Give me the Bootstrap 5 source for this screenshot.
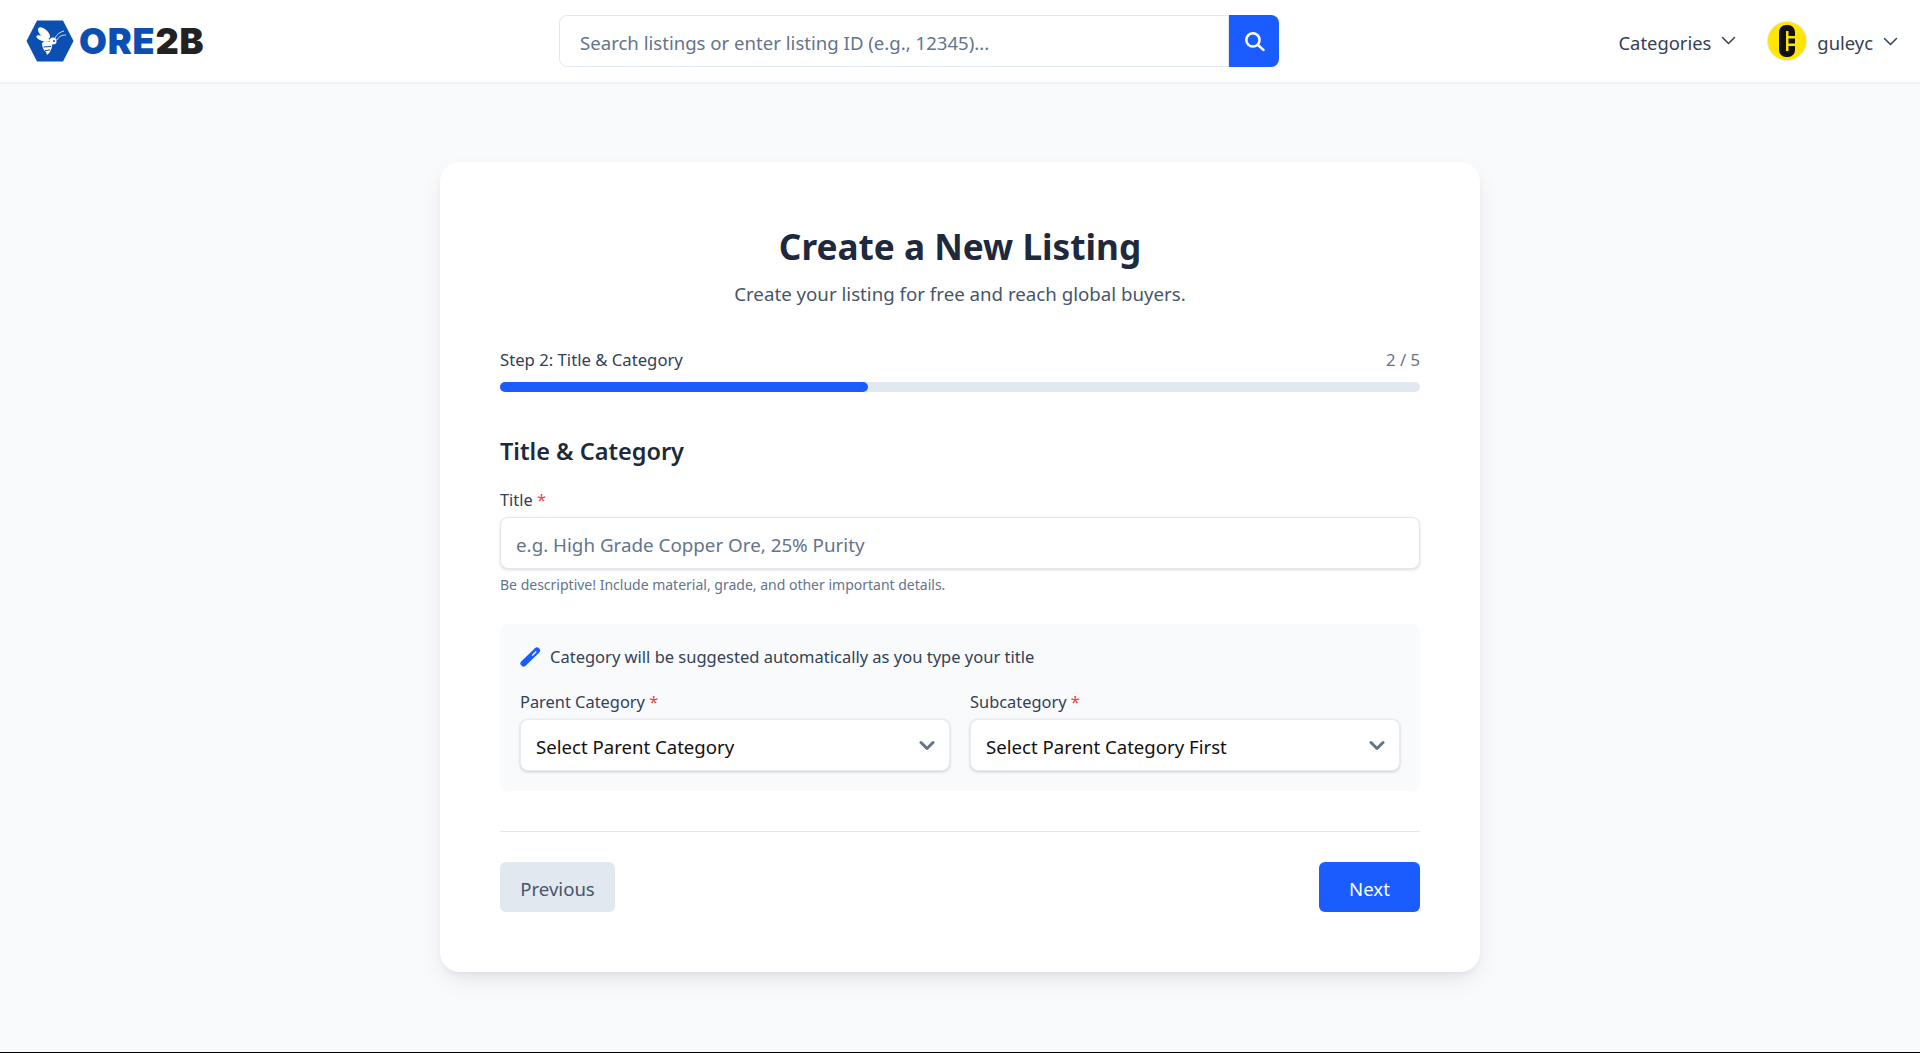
<!DOCTYPE html>
<html lang="en">
<head>
    <meta charset="UTF-8">
    <meta name="viewport" content="width=device-width, initial-scale=1.0">
    <title>Create a New Listing</title>
    <link rel="stylesheet" href="https://cdn.jsdelivr.net/npm/bootstrap@5.3.0/dist/css/bootstrap.min.css">
    <style>
        body { background: #f9fafc; font-family: "Noto Sans", "Open Sans", sans-serif; color: #334155; min-height: 1053px; }
        .top-bar { height: 82px; background: #fff; box-shadow: 0 1px 3px rgba(15,23,42,.07); padding: 0 22px 0 26px; }
        .logo-link { width: 520px; text-decoration: none; }
        .logo-word { font-family: Inter, sans-serif; font-weight: 900; font-size: 36px; letter-spacing: .8px; line-height: 1; color: #0b4fb3; margin-left: 5px; }
        .logo-word span { color: #222; margin: 0; }
        .search-box { width: 720px; height: 52px; margin-left: 13px; }
        .search-box .form-control { height: 52px; font-size: 18.6px; padding: 2px 12px 0 20px; border-color: #e2e8f0; border-radius: 8px 0 0 8px; color: #475569; }
        .search-box .form-control::placeholder { color: #64748b; }
        .search-go { flex: 0 0 50px; background: #1a5cff; border: 0; border-radius: 0 8px 8px 0; }
        .nav-drop { font-size: 18.4px; color: #334155; text-decoration: none; }
        .nav-label { padding-top: 3px; }
        .nav-caret { margin-left: 10px; }
        .user-menu { margin-left: 31px; }
        .avatar-dot { width: 40px; height: 40px; margin-right: 10px; border-radius: 50%; background: #ffe600; border: 1px solid #e2e8f0; }
        .sheet { width: 1040px; height: 810px; margin: 80px auto 0; padding: 60px; background: #fff; border-radius: 20px; box-shadow: 0 10px 25px -5px rgba(15,23,42,.1), 0 4px 10px -4px rgba(15,23,42,.08); }
        .sheet-title { font-size: 35.2px; font-weight: 700; color: #1e293b; line-height: 48px; margin: 0; }
        .sheet-sub { font-size: 18.7px; color: #475569; line-height: 28px; margin: 10px 0 0; }
        .step-row { margin-top: 40px; font-size: 16.7px; line-height: 24px; color: #334155; }
        .step-count { color: #64748b; }
        .step-track { height: 10px; background: #e2e8f0; border-radius: 5px; margin-top: 10px; }
        .step-fill { height: 10px; background: #1a5cff; border-radius: 5px; }
        .block-title { font-size: 23.5px; font-weight: 600; color: #1e293b; line-height: 32px; margin: 43px 0 21px; }
        .fld-label { font-size: 16.4px; line-height: 24px; color: #334155; margin: 0 0 5px; display: block; }
        .fld-label i { font-style: normal; color: #ef4444; }
        .fld-input { height: 52px; font-size: 18.8px; padding: 3px 15px 0; border-color: #e5e9ef; border-radius: 8px; box-shadow: 0 1px 3px rgba(15,23,42,.16); color: #475569; }
        .fld-input::placeholder { color: #64748b; }
        .fld-help { font-size: 14px; line-height: 20px; color: #64748b; margin-top: 6px; }
        .auto-panel { height: 167px; margin-top: 29px; padding: 21px 20px 20px; background: #f9fafc; border-radius: 8px; }
        .auto-hint { font-size: 16.5px; line-height: 24px; gap: 9px; margin-bottom: 21px; }
        .pick-row { --bs-gutter-x: 20px; }
        .pick-select { height: 52px; font-size: 18.6px; color: #111; padding: 3px 15px 0; border-color: #e8ecf1; border-radius: 8px; box-shadow: 0 1px 3px rgba(15,23,42,.2); background-image: none; }
        .pick-wrap { position: relative; }
        .pick-wrap svg { position: absolute; right: 15px; top: 21px; pointer-events: none; }
        .form-rule { border-top: 1px solid #e2e8f0; margin: 40px 0 30px; }
        .btn-back { width: 115px; height: 50px; padding-top: 9px; background: #e2e8f0; color: #475569; font-size: 18.6px; border: 0; border-radius: 6px; }
        .btn-next { width: 101px; height: 50px; padding-top: 9px; background: #1a5cff; color: #fff; font-size: 18.6px; border: 0; border-radius: 6px; }
        .page-end { height: 1px; background: #000; margin-top: auto; }
    </style>
</head>
<body class="d-flex flex-column">
    <nav class="top-bar d-flex align-items-center flex-shrink-0">
        <a class="logo-link d-flex align-items-center" href="#">
            <svg width="48" height="42" viewBox="0 0 48 42">
                <path d="M11 .5H37L47.500 21L37 41.500H11L.5 21Z" fill="#0b4fb3"/>
                <ellipse cx="18" cy="13" rx="7.500" ry="3.700" transform="rotate(42 18 13)" fill="#fff"/>
                <ellipse cx="17" cy="18.500" rx="7" ry="2.500" transform="rotate(18 17 18.500)" fill="#fff"/>
                <path d="M16 23C19 21 24 21 26 24C26.500 28 24 33 21 35L20 32C17 30 16 26 16 23Z" fill="#fff"/>
                <path d="M17.500 27L25 26.500M19 30.500L24 30" stroke="#0b4fb3" stroke-width="1"/>
                <circle cx="27" cy="21" r="3.600" fill="#fff"/>
                <circle cx="28" cy="21" r="1" fill="#0b4fb3"/>
                <path d="M29 18C31 14 34 12 38 11M31 20C33 16 36 15 40 15" stroke="#fff" stroke-width=".8" fill="none"/>
            </svg>
            <span class="logo-word">ORE<span>2B</span></span>
        </a>
        <form class="search-box d-flex" onsubmit="return false">
            <input type="text" class="form-control" placeholder="Search listings or enter listing ID (e.g., 12345)...">
            <button class="search-go d-flex align-items-center justify-content-center" aria-label="Search">
                <svg width="21" height="21" viewBox="0 0 20 20" fill="none" stroke="#fff" stroke-width="2.400" stroke-linecap="round"><circle cx="8.500" cy="8.500" r="6.300"/><path d="M13.300 13.300L18.500 18"/></svg>
            </button>
        </form>
        <div class="ms-auto d-flex align-items-center">
            <a class="nav-drop d-flex align-items-center" href="#">
                <span class="nav-label">Categories</span>
                <svg class="nav-caret" width="15" height="9" viewBox="0 0 15 9" fill="none" stroke="#334155" stroke-width="1.500" stroke-linecap="round" stroke-linejoin="round"><path d="M1.500 1.500L7.500 7.500L13.500 1.500"/></svg>
            </a>
            <a class="nav-drop d-flex align-items-center user-menu" href="#">
                <span class="avatar-dot d-flex align-items-center justify-content-center">
                    <svg width="16" height="32" viewBox="0 0 16 32"><rect width="16" height="32" rx="7" fill="#111"/><rect x="7" y="6" width="2.500" height="20" fill="#ffe600"/><rect x="9" y="11" width="7" height="2.500" fill="#ffe600"/><rect x="9" y="18.500" width="7" height="2.500" fill="#ffe600"/></svg>
                </span>
                <span class="nav-label">guleyc</span>
                <svg class="nav-caret" width="15" height="9" viewBox="0 0 15 9" fill="none" stroke="#334155" stroke-width="1.500" stroke-linecap="round" stroke-linejoin="round"><path d="M1.500 1.500L7.500 7.500L13.500 1.500"/></svg>
            </a>
        </div>
    </nav>

    <main class="sheet flex-shrink-0">
        <div class="text-center">
            <h1 class="sheet-title">Create a New Listing</h1>
            <p class="sheet-sub">Create your listing for free and reach global buyers.</p>
        </div>

        <div class="step-row d-flex justify-content-between">
            <span>Step 2: Title &amp; Category</span>
            <span class="step-count">2 / 5</span>
        </div>
        <div class="step-track"><div class="step-fill" style="width: 40%"></div></div>

        <h2 class="block-title">Title &amp; Category</h2>

        <label class="fld-label">Title <i>*</i></label>
        <input type="text" class="form-control fld-input" placeholder="e.g. High Grade Copper Ore, 25% Purity">
        <div class="fld-help">Be descriptive! Include material, grade, and other important details.</div>

        <div class="auto-panel">
            <div class="auto-hint d-flex align-items-center">
                <svg width="21" height="20" viewBox="0 0 21 20"><path d="M3.500 16.500L17 3.500" stroke="#1a5cff" stroke-width="6" stroke-linecap="round"/><path d="M12.500 8.200L16 4.800" stroke="#fff" stroke-width="1.200" stroke-linecap="round"/></svg>
                <span>Category will be suggested automatically as you type your title</span>
            </div>
            <div class="row pick-row">
                <div class="col-6">
                    <label class="fld-label">Parent Category <i>*</i></label>
                    <div class="pick-wrap">
                        <select class="form-select pick-select"><option>Select Parent Category</option></select>
                        <svg width="16" height="11" viewBox="0 0 16 11" fill="none" stroke="#64748b" stroke-width="3" stroke-linecap="round" stroke-linejoin="round"><path d="M2 2.500L8 8.500L14 2.500"/></svg>
                    </div>
                </div>
                <div class="col-6">
                    <label class="fld-label">Subcategory <i>*</i></label>
                    <div class="pick-wrap">
                        <select class="form-select pick-select"><option>Select Parent Category First</option></select>
                        <svg width="16" height="11" viewBox="0 0 16 11" fill="none" stroke="#64748b" stroke-width="3" stroke-linecap="round" stroke-linejoin="round"><path d="M2 2.500L8 8.500L14 2.500"/></svg>
                    </div>
                </div>
            </div>
        </div>

        <div class="form-rule"></div>
        <div class="d-flex justify-content-between">
            <button class="btn btn-back">Previous</button>
            <button class="btn btn-next">Next</button>
        </div>
    </main>
    <div class="page-end"></div>
    <script src="https://cdn.jsdelivr.net/npm/bootstrap@5.3.0/dist/js/bootstrap.bundle.min.js"></script>
</body>
</html>
